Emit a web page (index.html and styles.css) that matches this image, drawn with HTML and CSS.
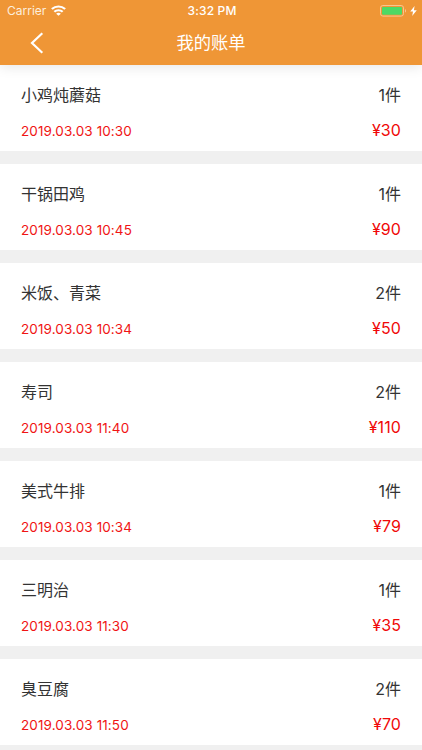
FILE: index.html
```html
<!DOCTYPE html>
<html lang="zh-CN">
<head>
    <meta charset="UTF-8">
    <meta name="viewport" content="width=device-width, initial-scale=1.0">
    <title>我的账单</title>
    <link rel="stylesheet" href="styles.css">
</head>
<body>

    <header class="header">
        <div class="status-bar">
            <div class="status-left">
                <span class="carrier">Carrier</span>
                <svg class="wifi" width="15" height="11" viewBox="0 0 14 11" preserveAspectRatio="none" fill="none" stroke="#fff" stroke-width="2.1">
                    <path d="M0.8 4.1C4.4 0.7 9.6 0.7 13.2 4.1"/>
                    <path d="M3.1 6.8C5.3 4.8 8.7 4.8 10.9 6.8"/>
                    <path d="M7 10.8L4.8 8.7C6.1 7.5 7.9 7.5 9.2 8.7Z" fill="#fff" stroke="none"/>
                </svg>
            </div>
            <span class="time">3:32 PM</span>
            <div class="status-right">
                <svg width="27" height="12" viewBox="0 0 27 12">
                    <rect x="0.5" y="0.5" width="23" height="10.6" rx="2.4" fill="none" stroke="#f8c68f"/>
                    <rect x="2" y="2" width="20" height="7.8" rx="1" fill="#4cd964"/>
                    <path d="M25 4C26.4 4.5 26.4 7.1 25 7.6Z" fill="#f8c68f"/>
                </svg>
                <svg class="bolt" width="7" height="10" viewBox="0 0 7 10">
                    <path d="M4.6 0L0.2 5.6H3L2.2 10L6.8 4.2H3.9Z" fill="#fff"/>
                </svg>
            </div>
        </div>
        <div class="nav-bar">
            <svg class="back" width="14" height="22" viewBox="0 0 14 22" fill="none" stroke="#fff" stroke-width="2.2">
                <path d="M12.3 1.3L2 11L12.3 20.7"/>
            </svg>
            <h1>我的账单</h1>
        </div>
    </header>

    <main class="bill-list">
        <div class="bill">
            <div class="row"><span class="name">小鸡炖蘑菇</span><span class="count">1件</span></div>
            <div class="row"><span class="date">2019.03.03 10:30</span><span class="price">¥30</span></div>
        </div>
        <div class="bill">
            <div class="row"><span class="name">干锅田鸡</span><span class="count">1件</span></div>
            <div class="row"><span class="date">2019.03.03 10:45</span><span class="price">¥90</span></div>
        </div>
        <div class="bill">
            <div class="row"><span class="name">米饭、青菜</span><span class="count">2件</span></div>
            <div class="row"><span class="date">2019.03.03 10:34</span><span class="price">¥50</span></div>
        </div>
        <div class="bill">
            <div class="row"><span class="name">寿司</span><span class="count">2件</span></div>
            <div class="row"><span class="date">2019.03.03 11:40</span><span class="price">¥110</span></div>
        </div>
        <div class="bill">
            <div class="row"><span class="name">美式牛排</span><span class="count">1件</span></div>
            <div class="row"><span class="date">2019.03.03 10:34</span><span class="price">¥79</span></div>
        </div>
        <div class="bill">
            <div class="row"><span class="name">三明治</span><span class="count">1件</span></div>
            <div class="row"><span class="date">2019.03.03 11:30</span><span class="price">¥35</span></div>
        </div>
        <div class="bill">
            <div class="row"><span class="name">臭豆腐</span><span class="count">2件</span></div>
            <div class="row"><span class="date">2019.03.03 11:50</span><span class="price">¥70</span></div>
        </div>
    </main>

</body>
</html>
```
FILE: styles.css
```css
* {
    box-sizing: border-box;
}

body {
    margin: 0;
    height: 750px;
    overflow: hidden;
    background-color: #f0f0f0;
    color: #333;
    font-family: Inter, "Noto Sans CJK SC", sans-serif;
}

/* Header */
.header {
    position: relative;
    height: 65.4px;
    background-color: #ef9636;
    color: #fff;
    box-shadow: 0 2px 12px rgba(0, 0, 0, 0.1);
}

.status-bar {
    display: grid;
    grid-template-columns: 1fr auto 1fr;
    align-items: center;
    height: 21px;
    padding: 0 5px 0 7px;
}

.status-left,
.status-right {
    display: flex;
    align-items: center;
}

.status-right {
    justify-content: flex-end;
}

.carrier {
    font-size: 12px;
    letter-spacing: 0;
    color: #fdeedd;
}

.wifi {
    margin-left: 5px;
}

.time {
    font-size: 12px;
    font-weight: 500;
    letter-spacing: 0.15px;
}

.bolt {
    margin-left: 3px;
}

.nav-bar {
    display: grid;
    grid-template-columns: 1fr auto 1fr;
    align-items: center;
    height: 44px;
    padding: 0 30px;
}

.nav-bar h1 {
    margin: 0;
    font-size: 17.3px;
    font-weight: 400;
    line-height: 24px;
}

/* Bill list */
.bill {
    height: 85.9px;
    margin-bottom: 13px;
    padding: 17px 21px 0;
    background-color: #fff;
}

.row {
    display: flex;
    justify-content: space-between;
    align-items: center;
    height: 24px;
}

.row + .row {
    margin-top: 12px;
}

.name,
.count {
    font-size: 16px;
}

.date {
    padding-top: 2px;
    font-size: 13.5px;
    letter-spacing: 0.1px;
    color: #f01414;
}

.price {
    font-size: 16px;
    letter-spacing: 0.1px;
    color: #f00808;
}
```
